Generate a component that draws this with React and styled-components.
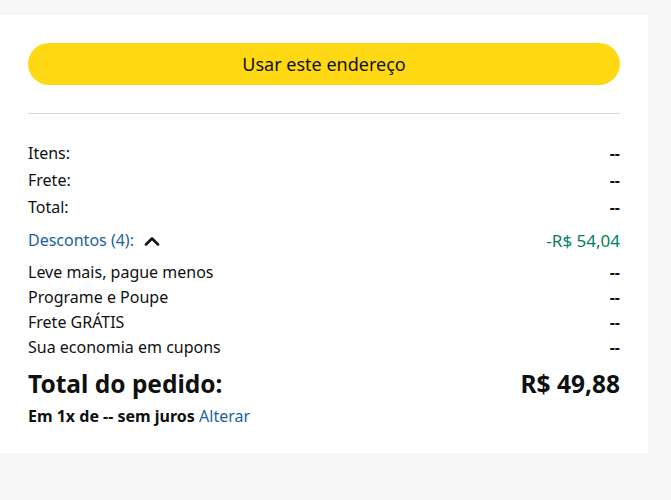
import React from "react"
import styled, { createGlobalStyle } from "styled-components"

const GlobalStyle = createGlobalStyle`
  html, body {
    margin: 0;
    padding: 0;
    background: #f7f7f7;
    font-family: "Noto Sans", "Liberation Sans", Arial, sans-serif;
    color: #0f1111;
  }
`

const Page = styled.div`
  padding-top: 15px;
  height: 485px;
`

const Card = styled.section`
  width: 648px;
  height: 438px;
  box-sizing: border-box;
  background: #fff;
  padding: 28px 28px 0;
`

const PrimaryButton = styled.button`
  display: block;
  width: 100%;
  height: 42px;
  border: none;
  border-radius: 21px;
  background: #ffd814;
  color: #0f1111;
  font-family: inherit;
  font-size: 18px;
  cursor: pointer;
`

const Divider = styled.hr`
  margin: 28px 0 0;
  border: none;
  border-top: 1px solid #d5d9d9;
`

const Summary = styled.div`
  margin-top: 26px;
`

const Row = styled.div`
  display: flex;
  justify-content: space-between;
  align-items: center;
  font-size: 16px;
  line-height: ${(p) => (p.$sub ? "25px" : "27px")};
  margin-top: ${(p) => p.$gap || 0}px;
`

const Label = styled.span`
  display: inline-flex;
  align-items: center;
  gap: 10px;
  color: ${(p) => (p.$link ? "#2162a1" : "inherit")};
`

const Value = styled.span`
  color: ${(p) => (p.$green ? "#067d62" : "inherit")};
  font-size: ${(p) => (p.$green ? "17px" : "inherit")};
  font-weight: ${(p) => (p.$dash ? 700 : 400)};
`

const TotalRow = styled.div`
  display: flex;
  justify-content: space-between;
  align-items: center;
  margin-top: 8px;
  font-size: 24.5px;
  line-height: 32px;
  font-weight: 700;
`

const Installments = styled.div`
  margin-top: 5px;
  font-size: 16px;
  line-height: 22px;
  font-weight: 700;
`

const Link = styled.a`
  color: #2162a1;
  font-weight: 400;
  text-decoration: none;
  cursor: pointer;
`

function ChevronUp() {
  return (
    <svg width="16" height="10" viewBox="0 0 16 10" aria-hidden="true">
      <path d="M2 8.5 L8 2.5 L14 8.5" fill="none" stroke="#0f1111" strokeWidth="2.6" strokeLinecap="round" strokeLinejoin="round" />
    </svg>
  )
}

const basics = ["Itens:", "Frete:", "Total:"]
const discounts = [
  "Leve mais, pague menos",
  "Programe e Poupe",
  "Frete GRÁTIS",
  "Sua economia em cupons",
]

export default function App() {
  return (
    <Page>
      <GlobalStyle />
      <Card>
        <PrimaryButton>Usar este endereço</PrimaryButton>
        <Divider />
        <Summary>
          {basics.map((b) => (
            <Row key={b}>
              <span>{b}</span>
              <Value $dash>--</Value>
            </Row>
          ))}
          <Row $gap={6}>
            <Label $link>
              Descontos (4):
              <ChevronUp />
            </Label>
            <Value $green>-R$ 54,04</Value>
          </Row>
          {discounts.map((d, i) => (
            <Row key={d} $sub $gap={i === 0 ? 6 : 0}>
              <span>{d}</span>
              <Value $dash>--</Value>
            </Row>
          ))}
          <TotalRow>
            <span>Total do pedido:</span>
            <span>R$ 49,88</span>
          </TotalRow>
          <Installments>
            Em 1x de -- sem juros <Link>Alterar</Link>
          </Installments>
        </Summary>
      </Card>
    </Page>
  )
}
